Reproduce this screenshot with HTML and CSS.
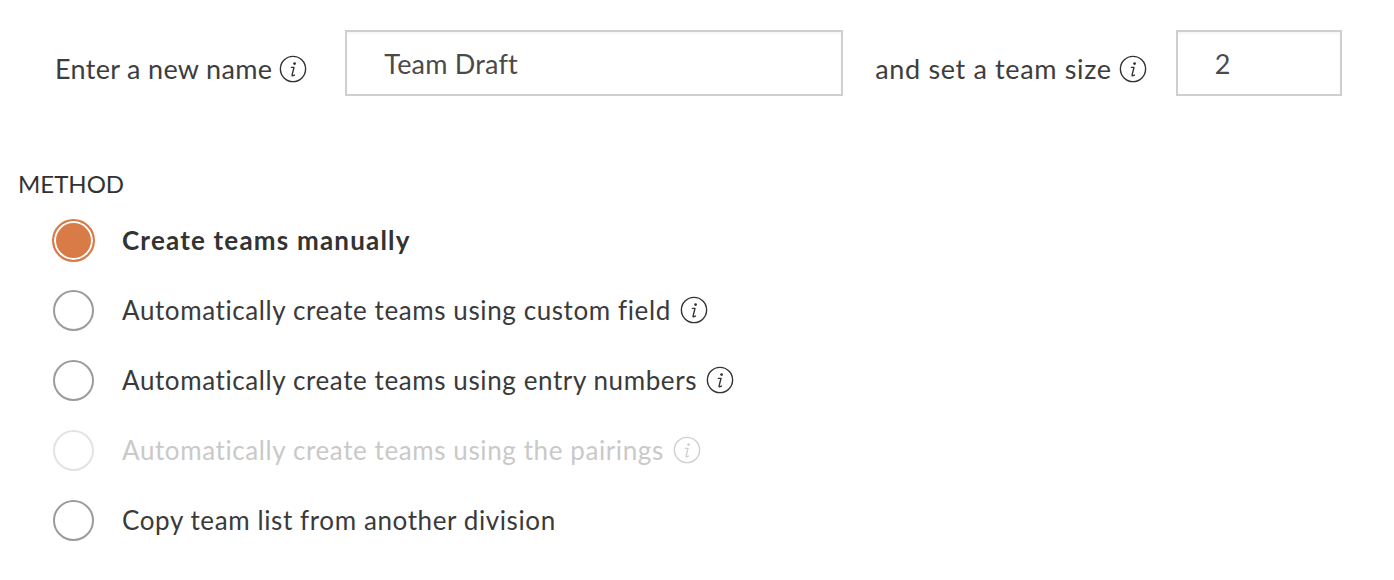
FILE: index.html
```html
<!DOCTYPE html>
<html lang="en">
<head>
    <meta charset="UTF-8">
    <title>Create Teams</title>
    <link rel="stylesheet" href="styles.css">
</head>
<body>
    <div class="page">
        <div class="name-row">
            <label class="field-label" for="teamName">
                Enter a new name
                <svg class="info" viewBox="0 0 28 28"><circle cx="14" cy="14" r="12.6"/><circle class="dot" cx="15.6" cy="8.6" r="1.4"/><path d="M12.4 12.4h2.6l-1.9 7.4q-0.3 1.3 1 0.9l1.3-0.6"/></svg>
            </label>
            <input type="text" id="teamName" class="text-input name-input" value="Team Draft">
            <label class="field-label size-label" for="teamSize">
                and set a team size
                <svg class="info" viewBox="0 0 28 28"><circle cx="14" cy="14" r="12.6"/><circle class="dot" cx="15.6" cy="8.6" r="1.4"/><path d="M12.4 12.4h2.6l-1.9 7.4q-0.3 1.3 1 0.9l1.3-0.6"/></svg>
            </label>
            <input type="text" id="teamSize" class="text-input size-input" value="2">
        </div>

        <div class="method">
            <div class="section-title">METHOD</div>
            <ul class="options">
                <li class="option selected">
                    <span class="radio"></span>
                    <span class="option-text">Create teams manually</span>
                </li>
                <li class="option">
                    <span class="radio"></span>
                    <span class="option-text">Automatically create teams using custom field</span>
                    <svg class="info" viewBox="0 0 28 28"><circle cx="14" cy="14" r="12.6"/><circle class="dot" cx="15.6" cy="8.6" r="1.4"/><path d="M12.4 12.4h2.6l-1.9 7.4q-0.3 1.3 1 0.9l1.3-0.6"/></svg>
                </li>
                <li class="option">
                    <span class="radio"></span>
                    <span class="option-text">Automatically create teams using entry numbers</span>
                    <svg class="info" viewBox="0 0 28 28"><circle cx="14" cy="14" r="12.6"/><circle class="dot" cx="15.6" cy="8.6" r="1.4"/><path d="M12.4 12.4h2.6l-1.9 7.4q-0.3 1.3 1 0.9l1.3-0.6"/></svg>
                </li>
                <li class="option disabled">
                    <span class="radio"></span>
                    <span class="option-text">Automatically create teams using the pairings</span>
                    <svg class="info" viewBox="0 0 28 28"><circle cx="14" cy="14" r="12.6"/><circle class="dot" cx="15.6" cy="8.6" r="1.4"/><path d="M12.4 12.4h2.6l-1.9 7.4q-0.3 1.3 1 0.9l1.3-0.6"/></svg>
                </li>
                <li class="option">
                    <span class="radio"></span>
                    <span class="option-text">Copy team list from another division</span>
                </li>
            </ul>
        </div>
    </div>
</body>
</html>
```

FILE: styles.css
```css
body {
    margin: 0;
    background-color: #fff;
    font-family: 'Lato', 'Liberation Sans', sans-serif;
    color: #3a3a3a;
}
.page {
    padding: 30px 0 0 0;
}
.name-row {
    display: flex;
    align-items: center;
    padding-left: 55px;
}
.field-label {
    display: flex;
    align-items: center;
    gap: 7px;
    font-size: 27px;
    line-height: 30px;
    letter-spacing: 0.32px;
    padding-top: 12px;
    color: #3d3d3d;
}
.size-label {
    margin-left: 32px;
    letter-spacing: 0.65px;
}
.info {
    width: 28px;
    height: 28px;
    flex-shrink: 0;
    fill: none;
    stroke: #333;
    stroke-width: 1.4;
    stroke-linecap: round;
    stroke-linejoin: round;
}
.info .dot {
    fill: #333;
    stroke: none;
}
.text-input {
    box-sizing: border-box;
    height: 66px;
    border: 2px solid #cfcfcf;
    border-radius: 0;
    padding: 0 0 0 37px;
    font-family: inherit;
    font-size: 27px;
    letter-spacing: 0.2px;
    color: #4a4a4a;
    box-shadow: inset 0 2px 2px rgba(0, 0, 0, 0.04);
    outline: none;
}
.name-input {
    width: 498px;
    margin-left: 38px;
}
.size-input {
    width: 166px;
    margin-left: 29px;
}
.method {
    margin-top: 73px;
}
.section-title {
    padding-left: 18px;
    font-size: 24px;
    line-height: 30px;
    color: #333;
}
.options {
    list-style: none;
    margin: 6px 0 0 0;
    padding: 0 0 0 53px;
}
.option {
    display: flex;
    align-items: center;
    height: 70px;
    font-size: 26px;
    line-height: 30px;
    letter-spacing: 0.6px;
    color: #3a3a3a;
}
.option .info {
    margin-left: 9px;
}
.radio {
    box-sizing: border-box;
    width: 41px;
    height: 41px;
    border-radius: 50%;
    border: 2px solid #9b9b9b;
    background-color: #fff;
    margin-right: 28px;
    flex-shrink: 0;
}
.selected .radio {
    width: 43px;
    height: 43px;
    margin-left: -1px;
    margin-right: 27px;
    border-color: #d97b47;
    background-color: #d97b47;
    box-shadow: inset 0 0 0 2px #fff;
}
.selected .option-text {
    font-weight: bold;
    letter-spacing: 1.2px;
    color: #333;
}
.disabled {
    color: #c9c9c9;
}
.disabled .radio {
    border-color: #e3e3e3;
}
.disabled .info {
    stroke: #cfcfcf;
}
.disabled .info .dot {
    fill: #cfcfcf;
}
```
